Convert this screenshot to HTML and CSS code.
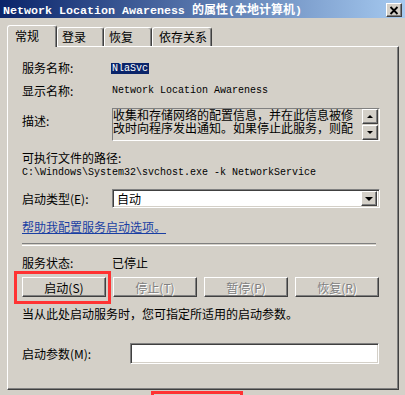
FILE: index.html
```html
<!DOCTYPE html>
<html lang="zh-CN">
<head>
  <meta charset="UTF-8">
  <title>Network Location Awareness 的属性(本地计算机)</title>
  <link rel="stylesheet" href="styles.css">
</head>
<body>

  <!-- TITLE BAR -->
  <div class="titlebar">
    <span class="title">Network Location Awareness <span class="title-cn">的属性</span>(<span class="title-cn">本地计算机</span>)</span>
    <span class="close raised">
      <svg width="14" height="11" viewBox="0 0 14 11">
        <path d="M3.5 2 L10.5 9 M10.5 2 L3.5 9" stroke="#000" stroke-width="1.8" fill="none"/>
      </svg>
    </span>
  </div>

  <!-- TABS -->
  <div class="tabs">
    <div class="tab active">常规</div>
    <div class="tab tab-logon">登录</div>
    <div class="tab tab-recover">恢复</div>
    <div class="tab tab-deps">依存关系</div>
  </div>

  <!-- GENERAL PANEL -->
  <div class="panel">
    <div class="row row-name">
      <span class="label">服务名称:</span>
      <span class="mono selected">NlaSvc</span>
    </div>

    <div class="row row-display">
      <span class="label">显示名称:</span>
      <span class="mono">Network Location Awareness</span>
    </div>

    <div class="row row-desc">
      <span class="label">描述:</span>
      <div class="desc">
        <div class="desc-text">收集和存储网络的配置信息，并在此信息被修改时向程序发出通知。如果停止此服务，则配</div>
        <div class="scrollbar">
          <span class="scroll-btn raised"><span class="arrow-up"></span></span>
          <span class="scroll-btn raised"><span class="arrow-down"></span></span>
        </div>
      </div>
    </div>

    <div class="row row-path-label">可执行文件的路径:</div>
    <div class="row row-path"><span class="mono">C:\Windows\System32\svchost.exe -k NetworkService</span></div>

    <div class="row row-type">
      <span class="label">启动类型(E):</span>
      <div class="combo sunken">
        <span class="combo-text">自动</span>
        <span class="combo-btn raised"><span class="arrow-combo"></span></span>
      </div>
    </div>

    <div class="row row-link"><a class="link" href="#">帮助我配置服务启动选项。</a></div>

    <div class="separator"></div>

    <div class="row row-status">
      <span class="label">服务状态:</span>
      <span>已停止</span>
    </div>

    <div class="buttons">
      <button class="btn raised">启动(S)</button>
      <button class="btn raised" disabled>停止(T)</button>
      <button class="btn raised" disabled>暂停(P)</button>
      <button class="btn raised" disabled>恢复(R)</button>
    </div>

    <div class="row row-hint">当从此处启动服务时，您可指定所适用的启动参数。</div>

    <div class="row row-params">
      <span class="label label-wide">启动参数(M):</span>
      <div class="input sunken"></div>
    </div>
  </div>

  <!-- red annotation boxes -->
  <div class="mark mark-start"></div>
  <div class="mark mark-ok"></div>

</body>
</html>
```

FILE: styles.css
```css
html, body {
  margin: 0;
  padding: 0;
}

body {
  width: 405px;
  height: 395px;
  overflow: hidden;
  position: relative;
  background: #d4d0c8;
  color: #000;
  font-family: "Noto Sans CJK SC", sans-serif;
  font-size: 12px;
  line-height: 14px;
}

.raised {
  background: #d4d0c8;
  border: 1px solid;
  border-color: #fff #404040 #404040 #fff;
  box-shadow: inset -1px -1px #808080;
  box-sizing: border-box;
}

.sunken {
  background: #fff;
  border: 1px solid;
  border-color: #808080 #fff #fff #808080;
  box-shadow: inset 1px 1px #404040, inset -1px -1px #d4d0c8;
  box-sizing: border-box;
}

/* title bar */
.titlebar {
  height: 18px;
  display: flex;
  background: linear-gradient(to right, #0a246a, #a6caf0);
}

.title {
  color: #fff;
  font-family: "Liberation Mono", monospace;
  font-weight: bold;
  font-size: 11.67px;
  line-height: 18px;
  padding-left: 3px;
  white-space: nowrap;
}

.title-cn {
  font-family: "Noto Sans CJK SC", sans-serif;
  font-size: 12px;
}

.close {
  width: 16px;
  height: 14px;
  margin: 3px 3px 0 auto;
  display: flex;
  align-items: center;
  justify-content: center;
}

.close svg {
  display: block;
}

/* tabs */
.tabs {
  height: 28px;
  display: flex;
  align-items: flex-end;
  padding-left: 7px;
}

.tab {
  height: 19px;
  box-sizing: border-box;
  border: 1px solid;
  border-bottom: none;
  border-color: #fff #404040 transparent #fff;
  border-radius: 3px 3px 0 0;
  box-shadow: inset -1px 0 #808080;
  padding-left: 4px;
  line-height: 17px;
}

.tab.active {
  position: relative;
  z-index: 2;
  width: 50px;
  height: 22px;
  margin-bottom: -1px;
  padding-left: 7px;
  line-height: 19px;
  background: #d4d0c8;
}

.tab-logon { width: 47px; }
.tab-recover { width: 48px; }
.tab-deps { width: 60px; padding-left: 6px; }

/* panel */
.panel {
  width: 392px;
  height: 344px;
  margin-left: 7px;
  box-sizing: border-box;
  border: 1px solid;
  border-color: #fff #404040 #404040 #fff;
  box-shadow: inset -1px -1px #808080;
  padding-left: 14px;
}

.row {
  display: flex;
  align-items: center;
  height: 14px;
  white-space: nowrap;
}

.label {
  width: 90px;
  flex: none;
}

.label-wide {
  width: 108px;
}

.mono {
  font-family: "Liberation Mono", monospace;
  font-size: 10px;
}

.selected {
  background: #0a246a;
  color: #fff;
  line-height: 11px;
  margin-left: -1px;
  padding: 0 1px;
}

.row-name { margin-top: 14px; }
.row-display { margin-top: 9px; }

.row-desc {
  margin-top: 10px;
  height: 33px;
  align-items: flex-start;
}

.row-desc .label {
  margin-top: 6px;
}

.desc {
  width: 268px;
  height: 33px;
  box-sizing: border-box;
  border: 1px solid;
  border-color: #808080 #fff #fff #808080;
  display: flex;
}

.desc-text {
  flex: 1;
  white-space: normal;
  line-height: 13px;
  margin-top: -1px;
  word-break: break-all;
}

.scrollbar {
  width: 16px;
  margin-right: 1px;
  display: flex;
  flex-direction: column;
  justify-content: space-between;
}

.scroll-btn {
  height: 15px;
  display: flex;
  align-items: center;
  justify-content: center;
}

.arrow-up, .arrow-down, .arrow-combo {
  width: 0;
  height: 0;
  border-left: 3px solid transparent;
  border-right: 3px solid transparent;
}

.arrow-up { border-bottom: 3px solid #000; }
.arrow-down { border-top: 3px solid #000; }

.arrow-combo {
  border-left-width: 4px;
  border-right-width: 4px;
  border-top: 4px solid #000;
}

.row-path-label { margin-top: 10px; }
.row-path { margin-top: 1px; }

.row-type {
  margin-top: 9px;
  height: 19px;
}

.combo {
  width: 268px;
  height: 19px;
  padding: 2px 2px 2px 4px;
  display: flex;
  align-items: center;
}

.combo-text {
  flex: 1;
}

.combo-btn {
  width: 16px;
  height: 15px;
  display: flex;
  align-items: center;
  justify-content: center;
}

.row-link { margin-top: 12px; }

.link {
  color: #1a3fa3;
  text-decoration: underline;
}

.separator {
  width: 354px;
  height: 1px;
  margin-top: 9px;
  border-top: 1px solid #808080;
  border-bottom: 1px solid #fff;
}

.row-status { margin-top: 10px; }

.buttons {
  display: flex;
  gap: 7px;
  margin-top: 7px;
}

.btn {
  width: 84px;
  height: 20px;
  padding: 0;
  font-family: "Noto Sans CJK SC", sans-serif;
  font-size: 12px;
  color: #000;
}

.btn:disabled {
  color: #808080;
  text-shadow: 1px 1px #fff;
}

.row-hint { margin-top: 10px; }

.row-params {
  margin-top: 22px;
  height: 21px;
}

.input {
  width: 249px;
  height: 21px;
}

/* red annotation boxes */
.mark {
  position: absolute;
  box-sizing: border-box;
  border: 3px solid #ff3333;
}

.mark-start {
  left: 14px;
  top: 271px;
  width: 97px;
  height: 33px;
}

.mark-ok {
  left: 151px;
  top: 391px;
  width: 92px;
  height: 20px;
}
```
